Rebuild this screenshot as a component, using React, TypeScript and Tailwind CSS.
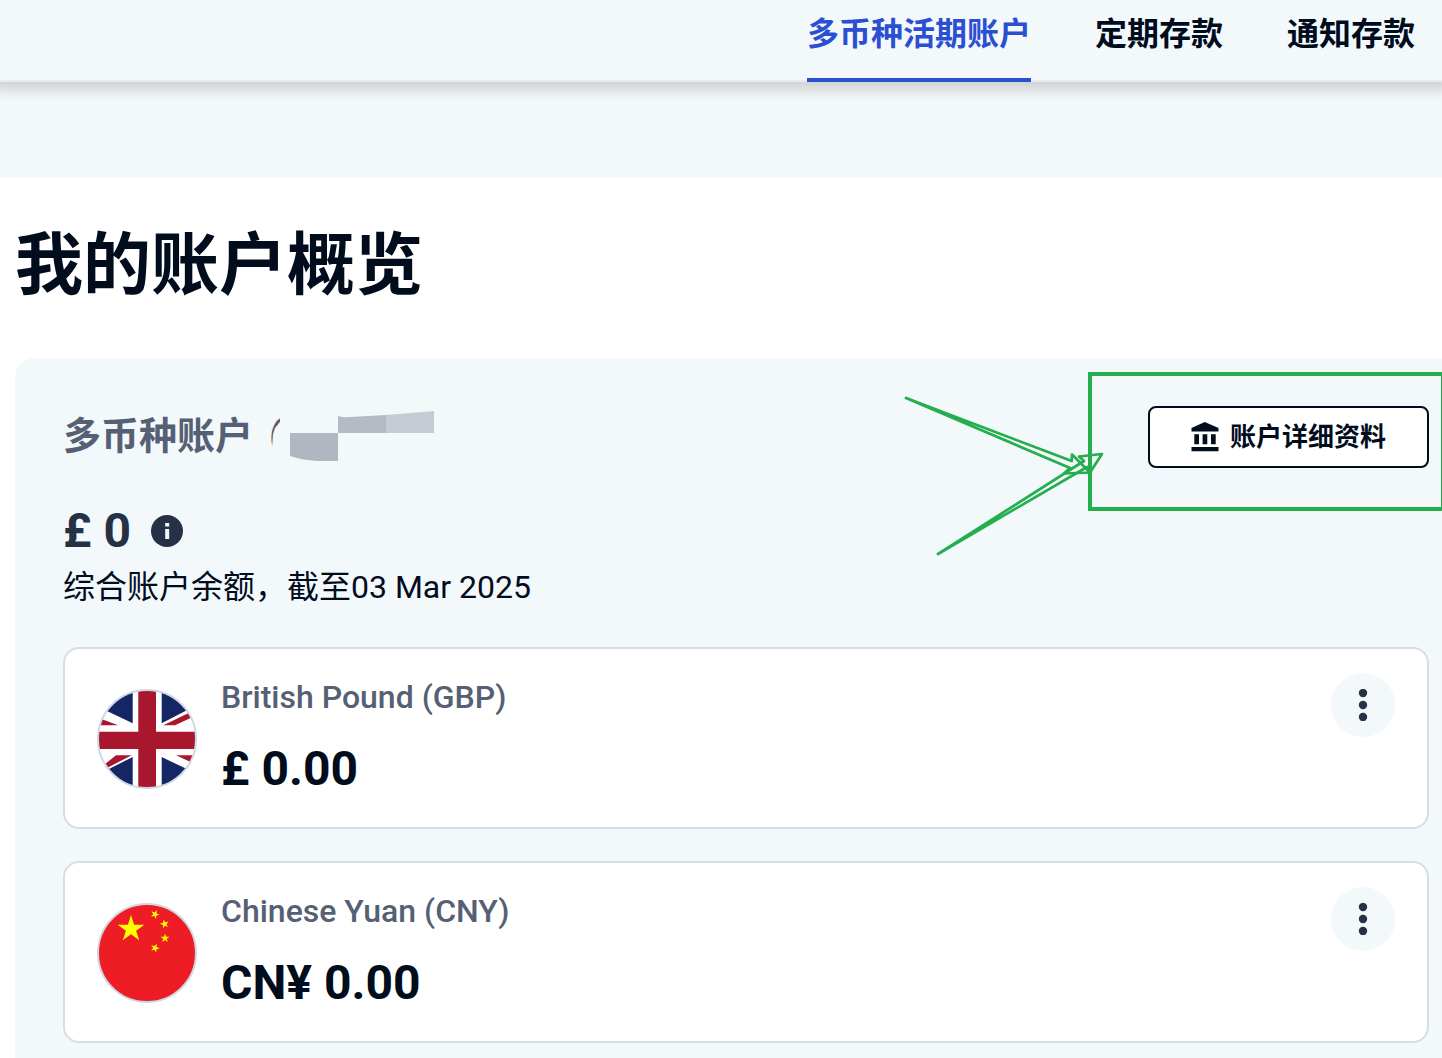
import React from "react";

const tabs = [
  { label: "多币种活期账户", active: true },
  { label: "定期存款", active: false },
  { label: "通知存款", active: false },
];

function star(cx: number, cy: number, r: number, turn: number) {
  const pts: string[] = [];
  for (let i = 0; i < 10; i++) {
    const a = ((turn - 90 + i * 36) * Math.PI) / 180;
    const d = i % 2 ? r * 0.382 : r;
    pts.push(`${(cx + d * Math.cos(a)).toFixed(2)},${(cy + d * Math.sin(a)).toFixed(2)}`);
  }
  return pts.join(" ");
}

function UkFlag() {
  return (
    <svg viewBox="0 0 100 100" className="size-[100px] shrink-0" role="img" aria-label="GBP">
      <clipPath id="uk-round">
        <circle cx="50" cy="50" r="49" />
      </clipPath>
      <g clipPath="url(#uk-round)">
        <rect width="100" height="100" fill="#fff" />
        <g fill="#152664">
          <path d="M35.7 34.3 0 17.3V0h35.7zM64.7 34.3 100 16V0H64.7zM35.7 68 0 86v14h35.7zM64.7 68l35.3 17v15H64.7z" />
        </g>
        <g fill="#a9172f">
          <path d="M41.3 0H59v100H41.3zM0 42.7h100V60H0z" />
          <path d="M0 28.3l5 2 16.3 6H0zM66.3 36.3H78L100 26v-6zM0 81.500 19 66.3h15.7L0 84zM79 66.3h21V76z" />
        </g>
      </g>
      <circle cx="50" cy="50" r="49" fill="none" stroke="#ced8e2" strokeWidth="2" />
    </svg>
  );
}

function CnFlag() {
  return (
    <svg viewBox="0 0 100 100" className="size-[100px] shrink-0" role="img" aria-label="CNY">
      <circle cx="50" cy="50" r="49" fill="#ee1c25" stroke="#ced8e2" strokeWidth="2" />
      <g fill="#ff0">
        <polygon points={star(34, 26, 14, 0)} />
        <polygon points={star(58, 11.3, 4.7, 23)} />
        <polygon points={star(67.6, 21, 4.7, -14)} />
        <polygon points={star(68, 35.3, 4.7, 0)} />
        <polygon points={star(58, 45, 4.7, 21)} />
      </g>
    </svg>
  );
}

function BankIcon() {
  return (
    <svg viewBox="0 0 28 30" className="h-[30px] w-7 shrink-0" fill="currentColor" aria-hidden="true">
      <path d="M13.8 0 27.500 6V9.500H.5V6zM3.300 12.200h4.700v10H3.300zM11.600 12.200h4.700v10h-4.700zM20 12.200h4.700v10H20zM.5 25h27v4.200H.5z" />
    </svg>
  );
}

function InfoIcon() {
  return (
    <svg viewBox="0 0 32 32" className="size-8" aria-hidden="true">
      <circle cx="16" cy="16" r="16" fill="#253145" />
      <path d="M14.2 8h4v3.4h-4zM14.2 14h4v10h-4z" fill="#f3f8fb" />
    </svg>
  );
}

/* Pixelated patch that hides the account number. */
function Redaction() {
  return (
    <svg
      viewBox="0 0 220 60"
      className="absolute left-[202px] top-0 h-[60px] w-[220px]"
      aria-hidden="true"
    >
      <path d="M15 16 10 22 8 28 7 42 4 46v8h22V8H15z" fill="#f3f8fb" />
      <path d="M25 27h48v28H52q-16-1-27-5z" fill="#b0b7c1" />
      <path d="M73 10q6 2 12 1l36-2v18H73z" fill="#b4bbc5" />
      <path d="M121 9l48-4v22h-48z" fill="#c6ccd4" />
    </svg>
  );
}

/* Hand-drawn marks pointing at the details button. */
function Annotation() {
  return (
    <svg
      viewBox="0 0 542 200"
      className="pointer-events-none absolute right-0 top-0 h-[200px] w-[542px]"
      fill="none"
      stroke="#24ae4e"
      aria-hidden="true"
    >
      <rect x="190" y="16" width="353" height="135" strokeWidth="4" />
      <g strokeWidth="2.7" strokeLinejoin="round">
        <path d="M6 40 171.7 103 172 96.500 190 114.500 164 115.500 170 110z" />
        <path d="M38 196 184 103 179 98.500 202 96 191 113 187 109z" />
      </g>
    </svg>
  );
}

function AccountCard({ flag, name, amount }: { flag: React.ReactNode; name: string; amount: string }) {
  return (
    <article className="flex items-start gap-6 rounded-2xl border-2 border-[#d5dee6] bg-white px-8 pt-6 pb-[30px]">
      <div className="pt-4">{flag}</div>
      <div className="flex-1 pt-1">
        <h2 className="text-[32px] leading-10 font-medium text-[#566074]">{name}</h2>
        <p className="mt-6 text-[48px] leading-14 font-bold text-[#010c1d]">{amount}</p>
      </div>
      <button
        type="button"
        aria-label={`${name} 更多`}
        className="flex size-16 shrink-0 items-center justify-center rounded-full bg-[#f3f8fb] text-[#253145]"
      >
        <svg viewBox="0 0 10 32" className="h-8 w-2.5" fill="currentColor" aria-hidden="true">
          <circle cx="5" cy="4" r="4.200" />
          <circle cx="5" cy="16" r="4.200" />
          <circle cx="5" cy="28" r="4.200" />
        </svg>
      </button>
    </article>
  );
}

export default function App() {
  return (
    <div className="overflow-hidden bg-white font-[Roboto,'Noto_Sans_CJK_SC',sans-serif] text-[#010c1d]">
      <div className="bg-[#f3f8fb] pb-24">
        <header className="shadow-[inset_0_-2px_0_#e9ebee,0_0_12px_8px_#cdd1d1]">
          <nav className="flex justify-end gap-16 pr-[27px]">
            {tabs.map((t) => (
              <a
                key={t.label}
                href="#"
                className={
                  t.active
                    ? "border-b-4 border-[#2b4fd3] pt-2.5 pb-5 text-[32px] leading-12 font-bold text-[#2b4fd3]"
                    : "border-b-4 border-transparent pt-2.5 pb-5 text-[32px] leading-12 font-bold"
                }
              >
                {t.label}
              </a>
            ))}
          </nav>
        </header>
      </div>

      <main className="pl-[15px]">
        <h1 className="pt-10 pb-11 text-[68px] leading-24 font-bold">我的账户概览</h1>

        <section className="relative rounded-tl-[20px] bg-[#f3f8fb] pt-12 pr-[13px] pb-4 pl-12">
          <div className="flex items-start justify-between">
            <div className="relative">
              <h2 className="flex gap-4 text-[38px] leading-[60px] font-bold text-[#566074]">
                <span>多币种账户</span>
                <span className="font-medium">(</span>
              </h2>
              <Redaction />
            </div>
            <button
              type="button"
              className="flex h-[62px] w-[281px] items-center justify-center gap-[11px] rounded-lg border-2 border-[#010c1d] bg-white text-[26px] font-bold"
            >
              <BankIcon />
              账户详细资料
            </button>
          </div>

          <div className="mt-[31px] flex items-center gap-5 text-[48px] leading-16 font-bold text-[#253145]">
            <span>£ 0</span>
            <InfoIcon />
          </div>
          <p className="text-[32px] leading-12">综合账户余额，截至03 Mar 2025</p>

          <div className="mt-9 flex flex-col gap-8">
            <AccountCard flag={<UkFlag />} name="British Pound (GBP)" amount="£ 0.00" />
            <AccountCard flag={<CnFlag />} name="Chinese Yuan (CNY)" amount="CN¥ 0.00" />
          </div>

          <Annotation />
        </section>
      </main>
    </div>
  );
}
